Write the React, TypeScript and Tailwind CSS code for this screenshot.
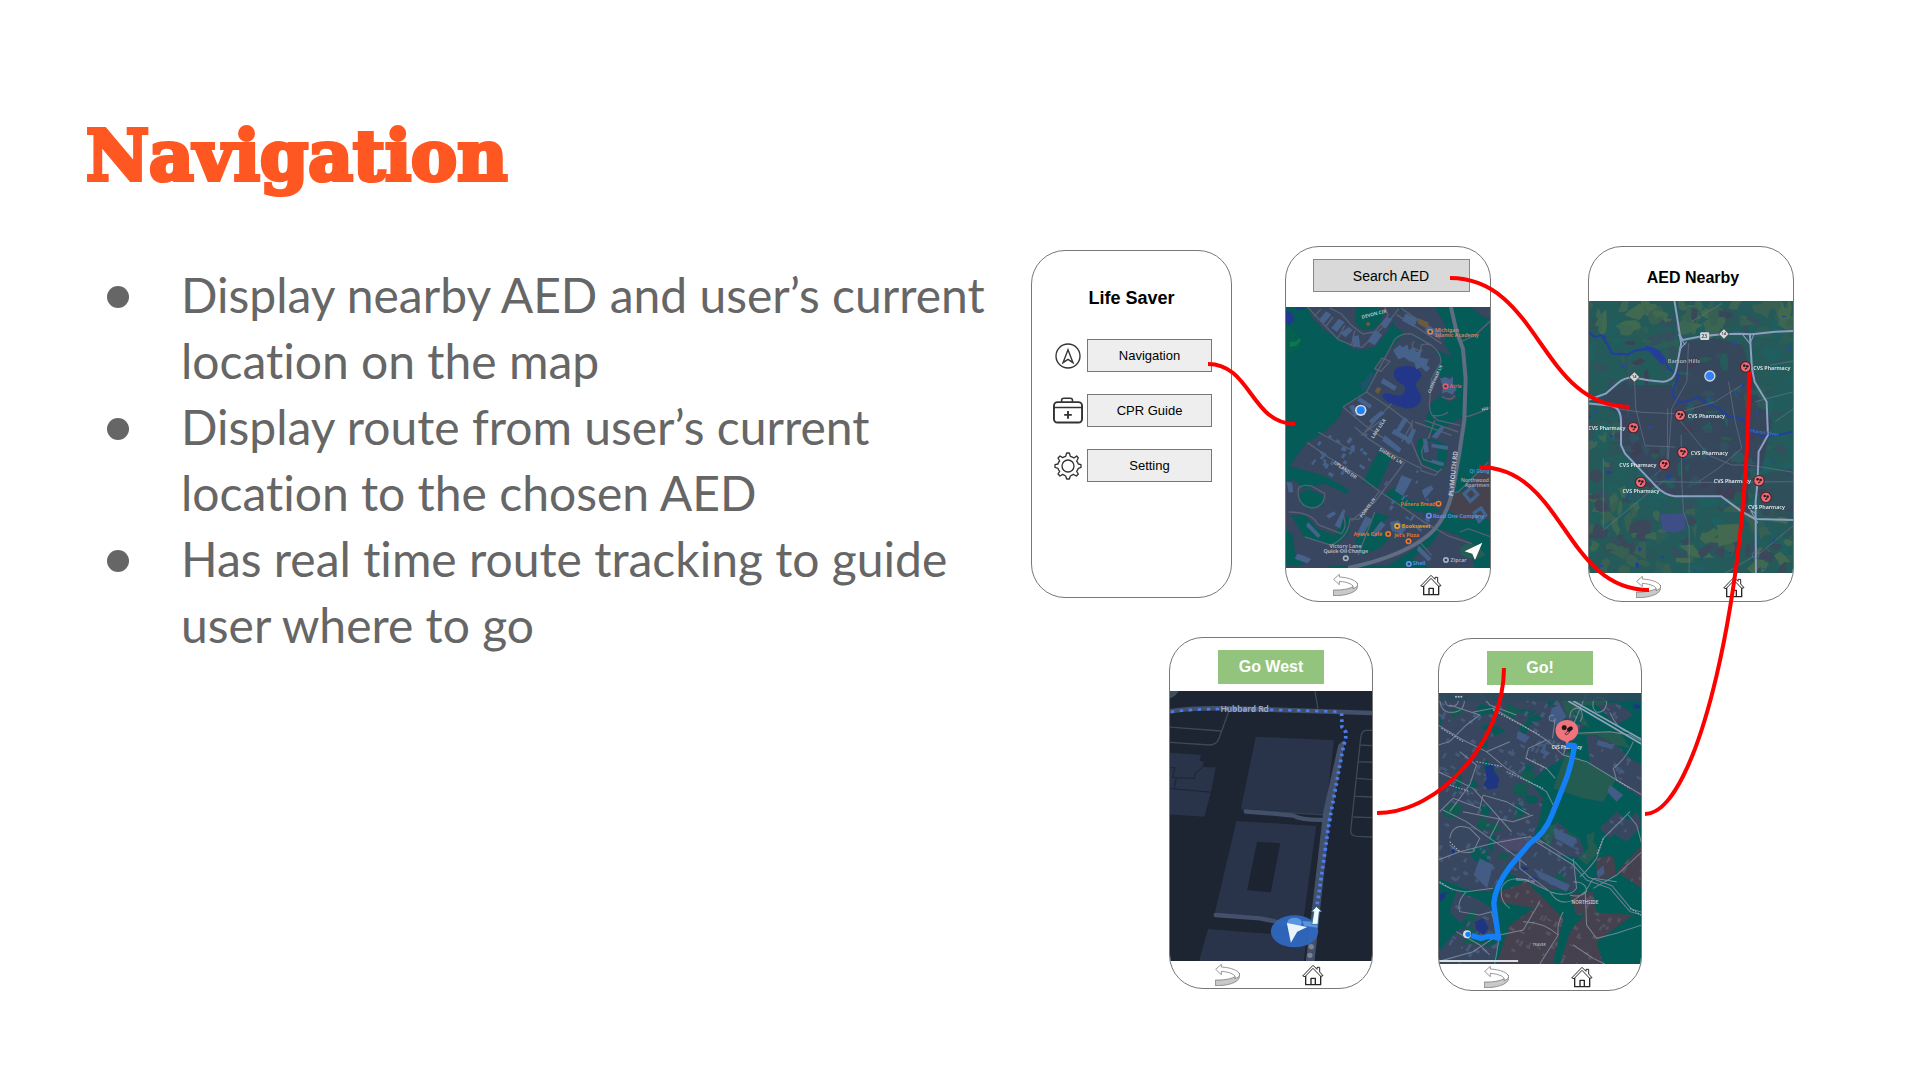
import type { ReactNode } from "react";

const points = [
  "Display nearby AED and user’s current location on the map",
  "Display route from user’s current location to the chosen AED",
  "Has real time route tracking to guide user where to go",
];

function makeRandom(seed: number) {
  let s = seed;
  return () => {
    s = (s * 16807) % 2147483647;
    return s / 2147483647;
  };
}

type Patch = { d: string; fill: string };

function blobs(seed: number, count: number, box: number[], size: number[], fills: string[]): Patch[] {
  const r = makeRandom(seed);
  return Array.from({ length: count }, () => {
    const cx = box[0] + r() * box[2];
    const cy = box[1] + r() * box[3];
    const w = size[0] + r() * size[1];
    const h = size[0] + r() * size[1];
    const n = 8;
    const pts = Array.from({ length: n }, (_, i) => {
      const a = (i / n) * Math.PI * 2 + 0.4;
      const k = 0.35 + r() * 0.9;
      return `${(cx + (Math.cos(a) * w * k) / 2).toFixed(0)} ${(cy + (Math.sin(a) * h * k) / 2).toFixed(0)}`;
    });
    return { d: `M${pts.join("L")}Z`, fill: fills[Math.floor(r() * fills.length)] };
  });
}

type House = { x: number; y: number; w: number; h: number; a: number };

function houses(seed: number, count: number, box: number[], size: number, angle: number): House[] {
  const r = makeRandom(seed);
  return Array.from({ length: count }, () => ({
    x: Math.round(box[0] + r() * box[2]),
    y: Math.round(box[1] + r() * box[3]),
    w: Math.round(size * (0.6 + r())),
    h: Math.round(size * (0.4 + r() * 0.5)),
    a: angle + (r() > 0.5 ? 90 : 0),
  }));
}

function Houses({ items, fill }: { items: House[]; fill: string }) {
  return (
    <g fill={fill}>
      {items.map((b, i) => (
        <rect key={i} x={b.x} y={b.y} width={b.w} height={b.h} transform={`rotate(${b.a} ${b.x} ${b.y})`} />
      ))}
    </g>
  );
}

function Patches({ items }: { items: Patch[] }) {
  return (
    <g>
      {items.map((p, i) => (
        <path key={i} d={p.d} fill={p.fill} />
      ))}
    </g>
  );
}

function Label({ x, y, fill = "#c3cad6", size = 15, rotate = 0, children }: { x: number; y: number; fill?: string; size?: number; rotate?: number; children: ReactNode }) {
  return (
    <text x={x} y={y} fill={fill} fontSize={size} fontFamily='"Noto Sans", sans-serif' fontWeight="600" transform={rotate ? `rotate(${rotate} ${x} ${y})` : undefined}>
      {children}
    </text>
  );
}

function CampusMap() {
  return (
    <svg viewBox="31 215 617 783" preserveAspectRatio="none" className="block h-full w-full" role="img" aria-label="Map with current location">
      <rect x="31" y="215" width="617" height="783" fill="#045b57" />
      <g fill="#38465f">
        <path d="M98 215H372L378 232 352 262 330 300 300 335 262 343 236 341 190 308 150 286 116 252Z" />
        <path d="M385 215H478L500 250 520 292 506 322 532 366 498 350 470 338 440 318 400 300 352 268Z" />
        <path d="M584 215H648V246H626L606 228Z" />
        <path d="M388 294 470 335 498 372 486 400 500 430 530 418 542 468 545 490 520 500 495 480 468 505 450 560 470 600 562 545 556 620 548 680 530 760 512 830 470 900 420 940 340 990H180L150 998H31V738L60 735 90 760 150 745 215 775 225 765 150 722 45 692 96 622 150 590 200 540 190 555 205 515 275 472 314 380Z" />
        <path d="M412 970 470 925 500 880 560 905 600 925 592 970 600 998H470Z" />
      </g>
      <path d="M538 776 562 770 600 725 648 665V850L560 852 520 825Z" fill="#46434f" />
      <g fill="#055c57">
        <path d="M242 215H304L330 228 316 262 296 282 262 284 240 262Z" />
        <path d="M264 740 310 650 352 662 308 760Z" />
        <path d="M430 610 470 610 520 630 512 690 490 710 440 680 425 640Z" />
        <path d="M330 775 362 755 410 800 480 815 500 830 440 832 372 812Z" />
        <path d="M72 775 100 762 145 780 146 812 100 822 76 805Z" />
        <path d="M50 840 90 838 130 880 180 900 205 850 222 842 225 890 190 930 90 910Z" />
        <path d="M240 915 300 830 345 845 300 880 345 905 320 935 262 960Z" />
        <path d="M31 880 55 900 62 960 90 990H31Z" />
      </g>
      <path d="M440 635 470 615 490 630 486 672 450 670Z" fill="#38465f" />
      <path d="M31 275Q60 270 66 300L82 310 76 340 50 350 31 368Z" fill="#075f50" />
      <path d="M45 320 66 318 74 308 78 316 64 332 46 334Z" fill="#0c7551" />
      <path d="M556 940Q575 912 602 930L606 930 632 958 610 970Q580 975 556 955Z" fill="#245e56" />
      <path d="M31 225Q60 232 60 255L44 268 31 262ZM62 215H92L84 224H68Z" fill="#23398f" />
      <path d="M360 402C385 386 425 390 438 412C446 428 424 436 422 448C426 466 444 478 438 496C430 516 402 526 376 514C350 508 328 496 322 482C326 468 344 474 362 480C384 484 396 472 388 450C368 444 350 424 360 402Z" fill="#22378a" />
      <g fill="none" stroke="#566174" strokeWidth="4">
        <path d="M98 215 150 270 190 312 232 330 262 336 300 300 348 250 372 220M165 218 200 236 230 270 264 296 300 290 340 240 330 215M118 244 138 222M152 275 175 245M190 308 210 270M230 330 240 286" />
        <path d="M365 238 440 285 500 325M378 218 450 268M204 515 275 470 360 312Q380 292 410 296L470 330Q500 356 498 380L470 430 464 500M418 318Q400 340 440 346 430 318 470 330M300 400 322 368 345 378 318 408Z" />
        <path d="M205 515 270 570 340 618M275 470 350 520 410 568 380 620M350 505 270 590M464 500Q460 540 490 555L556 570M500 484Q530 500 540 480M470 540Q500 545 520 530M570 545Q600 540 648 515M560 318 600 300 648 255" />
        <path d="M98 622 160 665 250 720 314 768 440 855 520 902 590 925M130 590 240 650M240 575 280 610 350 655 400 680 440 700M320 555 258 600M390 680 300 800 230 856M412 555 410 620 440 690 490 710M312 770 252 852 225 850M440 856 480 880M518 775 550 770 640 680" />
        <path d="M70 768Q70 745 110 752L150 775Q150 815 110 818 70 812 70 768M42 830Q110 830 130 868L200 895Q222 870 200 830M225 850Q225 900 170 930L90 905M150 950 262 945M300 830 250 960M430 915 470 960M555 890 580 880 648 905" />
        <path d="M420 560 530 600M450 555 550 590M480 555 460 610M460 620Q430 640 446 672L500 690M436 705 480 720 500 700" />
      </g>
      <path d="M528 215 545 290 564 340 572 430 568 555 552 660 538 740Q520 850 460 900Q380 965 220 998" fill="none" stroke="#5f6d82" strokeWidth="12" />
      <g fill="#46628a">
        <path d="M355 345 375 328 382 336 398 328 402 345 416 335 425 350 440 345 436 366 462 372 455 388 466 398 454 410 440 396 424 402 418 382 402 376 388 366 370 372Z" />
        <path d="M495 430 510 425 524 432 534 424 534 450 545 462 532 478 516 470 500 474 505 456Z" />
        <path d="M154 228 170 238 148 264 132 254ZM192 250 210 260 186 290 170 278ZM222 275 234 284 212 306 196 294ZM232 304 252 300 256 332 236 336ZM300 284 322 298 300 330 278 318ZM336 244 352 252 332 280 318 268Z" />
        <path d="M392 234 428 252 418 276 382 256ZM450 262 474 278 500 290 496 312 452 290ZM325 428 366 454 358 466 318 442Z" />
        <path d="M255 486 292 510 285 520 248 496ZM222 512 236 508 256 532 240 544ZM318 526 330 534 290 566 282 556ZM386 545 400 552 376 590 364 584ZM412 578 424 584 404 628 392 620ZM330 600 380 640 372 652 322 616ZM358 580 400 605 395 618 350 594Z" />
        <path d="M380 720 412 732 384 782 360 766ZM440 765 468 750 476 760 450 790ZM470 625 520 632 518 644 470 636ZM444 610 456 610 462 650 448 652ZM470 672 508 682 506 692 470 682ZM470 605 500 570 510 576 486 610Z" />
        <path d="M155 840 178 828 184 836 162 850ZM36 740 52 742 56 770 42 772ZM100 860 138 900 130 908 94 872ZM90 962 110 972 98 984 60 970 68 955ZM180 870 206 820 212 826 196 880ZM272 842 292 852 262 904 246 896ZM318 858 332 868 300 906 290 896ZM345 860 370 855 394 880 378 898 350 885ZM432 930 470 970 460 978 426 944Z" />
      </g>
      <Houses items={houses(5, 26, [125, 590, 170, 130], 13, 35)} fill="#46628a" />
      <Houses items={houses(9, 16, [340, 700, 120, 210], 11, 35)} fill="#46628a" />
      <g fill="#1c5368">
        <path d="M286 408 300 416 270 468 256 460ZM255 440 270 440 264 460Z" />
      </g>
      <path d="M308 455 320 460 310 476 300 468ZM430 248 462 262 456 280 428 264Z" fill="#6a5a3e" />
      <circle cx="280" cy="266" r="6" fill="#7a5a2e" />
      <g fill="none" stroke="#3e6590" strokeWidth="10">
        <path d="M568 775 590 756 608 778 586 798ZM598 832 618 818 632 840 612 858Z" />
      </g>
      <Label x={262} y={250} rotate={-14} size={14}>DEVON CIR</Label>
      <Label x={466} y={474} rotate={-66} size={12}>CLEMENGER LN</Label>
      <Label x={534} y={783} rotate={-84} size={19}>PLYMOUTH RD</Label>
      <Label x={296} y={610} rotate={-56} size={14}>LAKE LILA</Label>
      <Label x={312} y={645} rotate={32} size={14}>SHIRLEY LN</Label>
      <Label x={176} y={684} rotate={36} size={14}>UPLAND DR</Label>
      <Label x={262} y={848} rotate={-54} size={13}>POINTE LN</Label>
      <Label x={480} y={289} fill="#d08a63" size={16}>Michigan</Label>
      <Label x={480} y={304} fill="#d08a63" size={16}>Islamic Academy</Label>
      <Label x={524} y={458} fill="#ee5a68">Atria</Label>
      <Label x={377} y={811} fill="#f0762a" size={16}>Panera Bread</Label>
      <Label x={474} y={847} fill="#5f95f5" size={16}>Road One Company</Label>
      <Label x={381} y={878} fill="#f5a21d" size={16}>Booksweet</Label>
      <Label x={236} y={902} fill="#f0762a" size={16}>Ayse’s Café</Label>
      <Label x={358} y={904} fill="#f0762a" size={16}>Jet’s Pizza</Label>
      <Label x={164} y={938} fill="#b0b7c4" size={16}>Victory Lane</Label>
      <Label x={146} y={953} fill="#b0b7c4" size={16}>Quick Oil Change</Label>
      <Label x={584} y={714} fill="#3f9fe0">Qi Gong</Label>
      <Label x={558} y={739} fill="#a8a6b0">Northwood</Label>
      <Label x={570} y={754} fill="#a8a6b0">Apartmen</Label>
      <Label x={414} y={990} fill="#5f95f5" size={16}>Shell</Label>
      <Label x={527} y={979} fill="#b0b7c4" size={16}>Zipcar</Label>
      <Label x={622} y={528} rotate={-20} size={13}>HU</Label>
      {[
        [466, 289, "#d08a63"],
        [512, 453, "#ee5a68"],
        [491, 805, "#f0762a"],
        [462, 841, "#5f95f5"],
        [367, 872, "#f5a21d"],
        [340, 896, "#f0762a"],
        [401, 918, "#f0762a"],
        [213, 969, "#a9b2c0"],
        [402, 986, "#5f95f5"],
        [513, 974, "#a9b2c0"],
      ].map(([x, y, c]) => (
        <g key={`${x}-${y}`}>
          <circle cx={x} cy={y} r="9" fill={String(c)} />
          <circle cx={x} cy={y} r="4" fill="#33405a" />
        </g>
      ))}
      <circle cx="258" cy="525" r="17" fill="#d6dbe2" />
      <circle cx="258" cy="525" r="12" fill="#1e83ff" />
      <path d="M622 922 569 948 592 955 600 974Z" fill="#fff" />
    </svg>
  );
}

const terrain = blobs(11, 220, [39, 198, 617, 816], [24, 60], ["#225c5a", "#1f5d5e", "#2c5d57", "#34505e", "#2b5559", "#1f5f5f"]);
const forest = [
  ...blobs(31, 40, [39, 198, 617, 90], [20, 60], ["#3b6653", "#41694f", "#386052"]),
  ...blobs(23, 34, [39, 790, 260, 220], [16, 50], ["#3b6653", "#3a4859", "#386052"]),
  ...blobs(29, 34, [330, 820, 326, 190], [16, 50], ["#41694f", "#3a4859", "#3a4859", "#386052"]),
  ...blobs(37, 24, [39, 560, 110, 340], [16, 50], ["#3b6653", "#3a4859", "#215d5a"]),
];
const cityPatches = blobs(59, 90, [150, 290, 440, 500], [14, 40], ["#255c5b", "#2d5860", "#3f3f55", "#2b5a55", "#334f60"]);
const ponds = blobs(41, 40, [39, 240, 617, 770], [5, 14], ["#22409b", "#27489d"]);

const pharmacies: [number, number, number, number][] = [
  [511, 396, 534, 404],
  [315, 541, 338, 550],
  [175, 578, 40, 586],
  [323, 652, 347, 660],
  [268, 688, 133, 696],
  [197, 742, 142, 775],
  [551, 737, 416, 745],
  [572, 787, 518, 821],
];

function PillMark() {
  return (
    <g fill="#2b1f2a">
      <circle cx="-4" cy="-4" r="4" />
      <circle cx="5" cy="-2" r="4" />
      <rect x="-3" y="3" width="8" height="4" rx="2" transform="rotate(-35 1 5)" />
    </g>
  );
}

function NearbyMap() {
  return (
    <svg viewBox="39 198 617 816" preserveAspectRatio="none" className="block h-full w-full" role="img" aria-label="Map of nearby AED locations">
      <rect x="39" y="198" width="617" height="816" fill="#245b5a" />
      <Patches items={terrain} />
      <Patches items={forest} />
      <g fill="#38465c" opacity="0.92">
        <path d="M180 470 280 450 300 400 330 320 420 310 500 330 530 420 545 480 590 560 560 700 520 760 450 790 280 780 230 740 180 680 142 640 138 540 60 500 150 440Z" />
        <path d="M545 720 656 700V850L560 840Z" opacity="0.6" />
        <path d="M350 218 368 222 362 262 348 250ZM430 225 470 235 468 250 430 244Z" />
      </g>
      <Patches items={cityPatches} />
      <path d="M170 450 290 450 310 520 300 620 220 640 160 560Z" fill="#38465c" />
      <path d="M254 838 328 834 330 882 300 894 262 886Z" fill="#3d4f86" />
      <path d="M425 870 490 866 500 915 430 935Z" fill="#456950" />
      <Patches items={ponds} />
      <g fill="none" stroke="#22409b" strokeLinecap="round" strokeLinejoin="round">
        <path d="M39 290 60 306 80 300 98 330 112 356 160 358 180 346 216 342 240 352 262 374" strokeWidth="7" />
        <path d="M216 336 246 346 268 374 262 384 240 362Z" strokeWidth="8" fill="#22409b" />
        <path d="M268 380 284 404 312 420 300 450 292 480 312 502 340 498 370 488 400 508 430 520 460 545 500 550 530 590 560 604 610 600 656 590" strokeWidth="6" />
      </g>
      <g fill="none" stroke="#65758f" strokeWidth="2">
        <path d="M340 325 335 440 290 520 278 690M39 486 120 520 200 532 300 536 420 500 500 450M178 430 182 520 210 632 300 636M300 540 400 660 470 690 520 690 656 712M318 600 320 745 325 830 342 880V1014M85 670V880M85 885 200 790 262 740M240 740 380 742 656 740M370 740 430 700 500 640 480 560 460 440M450 1014 560 950 656 870M350 260 440 205M585 390 656 378M278 520 276 688 240 720M600 560 656 520M540 500 656 470" />
      </g>
      <g fill="none" stroke="#8e9dc2" strokeWidth="6" strokeLinejoin="round">
        <path d="M298 198 308 260 318 326 304 400Q296 440 262 440L220 436 178 428Q150 426 128 445L92 476 39 495M39 505 110 512Q138 518 138 560V630L150 656 230 740Q262 780 300 784H438L500 830 540 852 656 855" />
        <path d="M312 298 322 315 380 304 440 298 490 296 530 298 600 290 656 288" />
        <path d="M524 300 530 400 538 440 574 500 578 600 550 650 547 740 541 800 542 1014" />
        <path d="M310 300 330 330M500 296 524 326 536 298M312 345 335 320M540 835 526 825 548 865" strokeWidth="3" />
      </g>
      <circle cx="541" cy="960" r="10" fill="none" stroke="#65758f" strokeWidth="2" />
      <rect x="375" y="292" width="27" height="23" rx="4" fill="#d4d8dc" />
      <Label x={379} y={309} size={15} fill="#333a48">23</Label>
      {[
        [446, 297],
        [178, 426],
      ].map(([x, y]) => (
        <g key={x}>
          <path d={`M${x} ${y - 17} ${x + 17} ${y} ${x} ${y + 17} ${x - 17} ${y}Z`} fill="#4a4e52" />
          <path d={`M${x} ${y - 14} ${x + 14} ${y} ${x} ${y + 14} ${x - 14} ${y}Z`} fill="#d9d9d4" />
          <Label x={x - 7} y={y + 4} size={12} fill="#333a48">14</Label>
        </g>
      ))}
      <Label x={278} y={384} size={17} fill="#a7b4bd">Barton Hills</Label>
      <Label x={524} y={592} size={15} rotate={8} fill="#3f6be0">Huron River</Label>
      {pharmacies.map(([cx, cy, tx, ty]) => (
        <g key={`${cx}-${cy}`}>
          <circle cx={cx} cy={cy} r="17" fill="#4a1f2c" />
          <circle cx={cx} cy={cy} r="14" fill="#f26a70" />
          <g transform={`translate(${cx} ${cy})`}>
            <PillMark />
          </g>
          <Label x={tx} y={ty} size={16} fill="#e4e8ea">CVS Pharmacy</Label>
        </g>
      ))}
      <circle cx="404" cy="423" r="17" fill="#ccd6dc" />
      <circle cx="404" cy="423" r="13" fill="#3480f5" />
    </svg>
  );
}

function WalkMap() {
  return (
    <svg viewBox="28 198 611 810" preserveAspectRatio="none" className="block h-full w-full" role="img" aria-label="Turn by turn map on Hubbard Rd">
      <rect x="28" y="198" width="611" height="810" fill="#1d2432" />
      <path d="M28 198H58L46 212 28 222Z" fill="#3d5058" />
      <g fill="#29344a">
        <path d="M288 335 522 346 497 567 243 551Z" />
        <path d="M28 383 124 390 120 408 132 410 128 426 168 427 154 500 134 575 28 568Z" />
        <path d="M230 588 469 603 430 888 163 872Z" />
        <path d="M145 912 440 935 432 1008H118Z" />
      </g>
      <path d="M250 552 497 567 498 572 248 556Z" fill="#344057" />
      <path d="M292 650 361 655 333 802 262 796Z" fill="#1c2331" />
      <path d="M28 428H46L38 456 50 458 44 490M50 458 104 460 108 444 128 426M28 490 154 502" fill="none" stroke="#1d2432" strokeWidth="3" />
      <g fill="none" stroke="#3b4a56" strokeWidth="4">
        <path d="M465 198 474 250M206 262 178 340Q170 360 150 360L28 352M28 306 184 318M639 316H616Q604 318 602 340L572 618Q572 632 590 634L639 636M602 360 639 362M596 410 639 412M592 460 639 464M586 514 639 516M580 576 639 578" />
      </g>
      <path d="M258 560 340 566 400 572Q430 588 510 584" fill="none" stroke="#435069" strokeWidth="13" strokeLinecap="round" />
      <path d="M168 870 300 880 380 896" fill="none" stroke="#435069" strokeWidth="13" strokeLinecap="round" />
      <path d="M28 260Q90 248 200 250L400 256 639 264" fill="none" stroke="#435069" strokeWidth="14" />
      <path d="M545 350 556 346 508 600 464 1008H438L490 560 535 360Z" fill="#435069" />
      <path d="M34 261Q90 252 200 252L400 256 540 260" fill="none" stroke="#4a7df0" strokeWidth="8" strokeDasharray="10 17" />
      <path d="M545 265 546 306 558 322 557 340 548 376 525 500 508 590 488 730 470 850" fill="none" stroke="#4a7df0" strokeWidth="11" strokeDasharray="8 10" />
      <circle cx="454" cy="965" r="8" fill="#7c828c" />
      <circle cx="450" cy="991" r="8" fill="#7c828c" />
      <ellipse cx="404" cy="919" rx="71" ry="48" fill="#2f68bf" opacity="0.94" />
      <ellipse cx="404" cy="893" rx="22" ry="15" fill="#5c94e0" />
      <path d="M428 888 472 892 473 908 432 902Z" fill="#5c94e0" />
      <path d="M381 894 442 906 412 920 393 953Z" fill="#e8f3fb" />
      <path d="M470 845 454 860H462L456 898H474L478 860H486Z" fill="#f2fbff" stroke="#1d5a86" strokeWidth="2" />
      <Label x={182} y={261} size={25} fill="#a2a9b5">Hubbard Rd</Label>
    </svg>
  );
}

const suburb =
  "M25 204H400L410 240 470 290 440 330 400 400 350 430 300 470 340 520 330 580 310 640 240 700 200 780 180 800 100 790 25 760ZM500 240 560 232 610 270 560 300ZM470 330 540 340 600 400 636 420V520L560 470 480 420ZM340 640 380 590 450 640 470 700 380 690ZM240 690 330 640 440 730 440 800 330 790 230 740ZM510 610 560 560 600 590 540 640ZM556 630 620 560 636 600 590 650ZM80 800 140 820 185 850 205 960 190 1017H25V980L100 900 60 860Z";
const midtown = "M210 800 290 770 380 860 400 880 370 1017H200L240 900 310 850 210 830ZM500 700 550 690 560 750 500 770ZM560 740 636 660V790ZM420 810 490 800 500 860 440 870ZM420 920 470 860 610 870 500 950 520 1017H390Z";
const suburbHouses = houses(71, 460, [25, 215, 611, 800], 12, 30);
const greens = blobs(83, 60, [25, 220, 420, 760], [20, 50], ["#085b57", "#125c50", "#085b57"]);

function RouteMap() {
  return (
    <svg viewBox="25 204 611 813" preserveAspectRatio="none" className="block h-full w-full" role="img" aria-label="Route map to CVS Pharmacy">
      <clipPath id="built-up">
        <path d={suburb} />
      </clipPath>
      <clipPath id="midtown">
        <path d={midtown} />
      </clipPath>
      <rect x="25" y="204" width="611" height="813" fill="#045c58" />
      <path d={suburb} fill="#394860" />
      <path d={midtown} fill="#45424f" />
      <path d="M390 204H540L520 240 440 240 480 310 410 270ZM440 330 500 318 570 320 600 370 560 360 500 330ZM410 380 560 460 520 530 460 520 370 490ZM330 630 350 600 380 600 360 670Z" fill="#255d52" />
      <path d="M470 630 495 620 490 650 510 680 470 720 445 700 475 670Z" fill="#255d52" />
      <g clipPath="url(#built-up)">
        <Patches items={greens} />
        <Houses items={suburbHouses} fill="#465978" />
      </g>
      <g clipPath="url(#midtown)">
        <Houses items={suburbHouses} fill="#57535f" />
      </g>
      <g fill="#435d86">
        <path d="M365 250 390 240 410 275 380 300 360 280ZM265 318 300 336 286 354 260 340ZM330 380 350 350 346 376 362 384 350 392ZM505 345 550 360 544 372 500 360ZM540 480 580 510 560 530 532 500ZM150 700 190 720 172 790 132 750ZM310 730 420 780 410 800 330 760ZM370 610 440 640 430 670 376 640ZM500 740 520 720 524 745 505 760Z" />
      </g>
      <path d="M166 424 188 416 194 440 208 460 204 488 176 494 162 480 170 460ZM136 890 160 880 176 908 162 930 140 916ZM304 750 326 764 312 768ZM275 724 300 730 280 738ZM30 808 52 800 44 820 32 830ZM62 676 78 670 74 690ZM610 238 630 240 628 252 612 250Z" fill="#1f3684" />
      <path d="M204 644 270 634 290 650 268 682 220 668Z" fill="#4c4a6c" />
      <g fill="none" stroke="#8793a3" strokeWidth="3" opacity="0.8">
        <path d="M30 215Q30 262 64 262 104 262 104 225M45 215Q45 244 64 244 86 244 86 225M25 300 100 345 170 380 230 430 280 460 350 500 370 540M128 262 190 250 270 296 350 345 400 390 470 410 560 465 636 510M25 440 90 470 130 490 210 580 245 620M60 240 150 270 110 300 60 350 25 360M350 345 296 370 288 400 350 430 376 460M372 272A9 9 0 1 0 376 280L368 340M150 204 180 240 260 270M90 380 140 420 120 480 60 560M170 380 240 350" />
        <path d="M40 555 110 590 180 640 240 680 290 720M25 705 90 680 190 655 300 635 340 655M60 640Q70 590 120 610L150 640 130 680Q90 690 60 660M210 580 180 640M100 560 250 590 310 570M25 770Q70 800 110 800L190 790M110 800Q80 830 90 860L150 870 185 860M185 860Q195 900 205 930M195 1017 210 930 280 915 330 830" />
        <path d="M215 790Q230 750 290 765L360 800Q390 850 440 820L466 800 490 760 560 770M215 790Q210 830 240 850M270 700 270 730 360 800Q420 820 440 790M440 790 430 700M430 770Q470 770 470 800 450 820 420 810M400 860Q380 900 385 930L330 1017M466 800 470 900 500 940 560 925 636 900M430 960 490 1000 525 1017M385 930Q340 890 280 890M450 755Q470 740 500 700L520 640 600 560M490 790 560 750 636 680M595 570 620 600 636 660M205 930 130 980 25 1010M80 920 150 960 180 990" />
        <path d="M470 204 430 300 400 390M420 280Q420 245 450 250 465 270 450 290M490 230Q500 205 530 230 530 262 500 262 485 250 490 230M440 325 540 320 600 330 636 350M540 262Q560 310 590 320M560 465 550 430Q590 400 610 350M30 560 70 520 150 550M150 550 160 510 230 530 300 570" />
      </g>
      <path d="M430 228 636 344M415 228 636 358" fill="none" stroke="#8ea2bb" strokeWidth="5" />
      <path d="M310 645 430 720 470 765 540 790 600 860 636 870M318 638 436 712 476 757 546 782 604 852 636 862" fill="none" stroke="#6f8299" strokeWidth="3" />
      <g fill="none" stroke="#a3adba" strokeWidth="3" strokeDasharray="5 4">
        <path d="M35 310 100 350M190 255 330 330M290 400 350 430M140 410 220 425M230 440 340 490M60 480 120 500M520 640 500 690M560 465 600 490M30 770 70 795M60 650 90 680M600 850 636 872" />
      </g>
      <rect x="25" y="204" width="611" height="24" fill="#2d4a5c" opacity="0.85" />
      <g fill="#b5bfca">
        <circle cx="79" cy="215" r="3" />
        <circle cx="87" cy="215" r="3" />
        <circle cx="95" cy="215" r="3" />
      </g>
      <Label x={366} y={372} size={13} fill="#f0f3f4">CVS Pharmacy</Label>
      <Label x={425} y={838} size={14} fill="#c3cad6">NORTHSIDE</Label>
      <Label x={308} y={964} size={11} fill="#a3adba">TRAVER</Label>
      <Label x={258} y={766} size={10} rotate={8} fill="#a3adba">BARTON DR</Label>
      <path d="M408 360 434 362Q424 430 398 490L366 570Q345 625 300 655L240 725Q196 785 192 835L206 940Q180 928 155 940L125 932" fill="none" stroke="#1480f7" strokeWidth="16" strokeLinejoin="round" strokeLinecap="butt" />
      <circle cx="112" cy="928" r="12" fill="#d6dde5" />
      <circle cx="115" cy="928" r="8" fill="#1480f7" />
      <path d="M411 285C431 285 445 298 445 316 445 334 430 346 418 348L411 356 404 348C390 346 377 334 377 316 377 298 391 285 411 285Z" fill="#f0747b" />
      <g transform="translate(411 315)" fill="#1f171d" stroke="#1f171d">
        <circle cx="-8" cy="-7" r="7" />
        <ellipse cx="9" cy="-3" rx="9" ry="6" transform="rotate(-30 9 -3)" />
        <rect x="-6" y="5" width="15" height="6" rx="3" transform="rotate(-40 2 8)" fill="none" strokeWidth="2" />
      </g>
      <rect x="25" y="1005" width="240" height="6" fill="#d9e0e0" />
    </svg>
  );
}

function BackIcon() {
  return (
    <svg viewBox="0 0 75 66" className="h-[22px] w-[25px]" fill="none" stroke="#666" strokeWidth="2" strokeLinejoin="round" aria-hidden="true">
      <path d="M1 48C30 49 62 44 73 27V40C70 56 36 66 1 65Z" fill="#c9c9c9" />
      <path d="M2 16 19 1V9C50 11 72 20 74 32 74 38 66 42 60 44 66 32 44 24 19 22V32Z" fill="#fff" />
    </svg>
  );
}

function HomeIcon() {
  return (
    <svg viewBox="0 0 66 64" className="h-[22px] w-[22px]" fill="none" stroke="#262626" strokeWidth="4" strokeLinejoin="round" strokeLinecap="round" aria-hidden="true">
      <path d="M11 34V61H56V34" />
      <path d="M27 60V42H40V60" />
      <path d="M3 34 33 3 45 15V9H53V23L63 34 56 36 33 12 10 36Z" fill="#fff" strokeWidth="3" />
    </svg>
  );
}

function Phone({ className, header, footer, label, children }: { className: string; header: ReactNode; footer: string; label: string; children: ReactNode }) {
  return (
    <section aria-label={label} className={`flex flex-col overflow-hidden rounded-[34px] border border-[#777] bg-white ${className}`}>
      {header}
      <div className="-mx-px min-h-0 flex-1">{children}</div>
      <nav className={`flex items-center ${footer}`}>
        <button type="button" aria-label="Back" className="flex w-[87px]">
          <BackIcon />
        </button>
        <button type="button" aria-label="Home">
          <HomeIcon />
        </button>
      </nav>
    </section>
  );
}

function CompassIcon() {
  return (
    <svg viewBox="0 0 78 78" className="w-[26px]" fill="none" stroke="#333" strokeWidth="4" strokeLinejoin="miter" aria-hidden="true">
      <circle cx="39" cy="39" r="36" />
      <path d="M39 20 24 59 39 49 54 59Z" />
    </svg>
  );
}

function KitIcon() {
  return (
    <svg viewBox="0 0 94 84" className="w-[31px]" fill="none" stroke="#333" strokeWidth="6" aria-hidden="true">
      <rect x="3" y="16" width="88" height="64" rx="11" />
      <path d="M27 15V10Q27 4 34 4H54Q61 4 61 10V15M4 33H90" strokeWidth="5" />
      <path d="M47 44V68M35 56H59" />
    </svg>
  );
}

function GearIcon() {
  return (
    <svg viewBox="0 0 84 84" className="w-[28px]" fill="none" stroke="#333" strokeWidth="4" strokeLinejoin="round" aria-hidden="true">
      <circle cx="42" cy="42" r="18" />
      <path d="M38 3H46L49 13Q56 15 60 18L68 12 73 18 68 27Q71 31 73 36L81 38V46L73 49Q71 54 68 58L73 66 67 72 58 67Q54 70 49 72L46 81H38L35 72Q30 70 26 67L18 72 12 66 17 58Q13 54 12 49L3 46V38L12 36Q13 31 17 27L12 18 18 12 26 17Q30 14 35 13Z" />
    </svg>
  );
}

const menu = [
  { label: "Navigation", icon: <CompassIcon /> },
  { label: "CPR Guide", icon: <KitIcon /> },
  { label: "Setting", icon: <GearIcon /> },
];

function Connectors() {
  return (
    <svg viewBox="1031 246 763 745" className="pointer-events-none absolute inset-0 h-[745px] w-[763px]" fill="none" stroke="#f00" strokeWidth="4" aria-hidden="true">
      <path d="M1208 364C1251 364 1251 424 1295 424" />
      <path d="M1450 278C1540 278 1540 407 1630 407" />
      <path d="M1479 467C1564 467 1564 590 1649 590" />
      <path d="M1749 372C1749 593 1697 814 1645 814" />
      <path d="M1377 813C1440 813 1504 740 1504 668" />
    </svg>
  );
}

export default function App() {
  return (
    <main className="min-h-screen bg-white pt-[116px] pr-[126px] pl-[86px] font-['Liberation_Sans',Arial,sans-serif] text-black">
      <h1 className="font-['DejaVu_Serif',serif] text-[69px] leading-[80px] font-bold text-[#ff5722] [-webkit-text-stroke:4px_#ff5722]">Navigation</h1>
      <div className="mt-[50px] flex items-start">
        <ul className="min-w-0 flex-1 pt-4 pr-6 pl-[21px] font-['Lato',sans-serif] text-[48px] leading-[66px] text-[#666] [font-variant-ligatures:none]">
          {points.map((p) => (
            <li key={p} className="flex">
              <span aria-hidden="true" className="mt-[24px] mr-[52px] size-[22px] shrink-0 rounded-full bg-[#666]" />
              <span>{p}</span>
            </li>
          ))}
        </ul>
        <div className="relative w-[763px] shrink-0">
          <div className="flex items-start">
            <section aria-label="Life Saver menu" className="mt-1 mr-[53px] h-[348px] w-[201px] rounded-[34px] border border-[#777] bg-white">
              <h2 className="mt-[35px] text-center text-[18px] leading-6 font-bold">Life Saver</h2>
              <ul className="mt-[29px] flex flex-col gap-[22px]">
                {menu.map((m) => (
                  <li key={m.label} className="flex h-[33px] items-center pl-[21px]">
                    <span className="flex w-[34px] shrink-0 justify-center pr-1">{m.icon}</span>
                    <button type="button" className="h-[33px] w-[125px] shrink-0 border border-[#777] bg-[#eee] text-[13px]">
                      {m.label}
                    </button>
                  </li>
                ))}
              </ul>
            </section>
            <Phone
              label="Search AED"
              className="mr-[97px] h-[356px] w-[206px]"
              footer="h-[33px] pl-[47px]"
              header={
                <header className="flex h-[60px] shrink-0 justify-center pt-3">
                  <button type="button" className="ml-[6px] h-[33px] w-[157px] border border-[#888] bg-[#d9d9d9] pt-px text-[14px]">
                    Search AED
                  </button>
                </header>
              }
            >
              <CampusMap />
            </Phone>
            <Phone label="AED Nearby" className="h-[356px] w-[206px]" footer="h-[28px] pl-[47px]" header={<h2 className="h-[54px] shrink-0 pt-[19px] pl-1 text-center text-[16px] leading-6 font-bold">AED Nearby</h2>}>
              <NearbyMap />
            </Phone>
          </div>
          <div className="mt-[35px] ml-[138px] flex items-start">
            <Phone
              label="Walking directions"
              className="mr-[65px] h-[352px] w-[204px]"
              footer="h-[27px] pl-[45px]"
              header={
                <header className="flex h-[53px] shrink-0 justify-center pt-3">
                  <button type="button" className="h-[34px] w-[106px] bg-[#93c47d] text-[16px] font-bold text-white">
                    Go West
                  </button>
                </header>
              }
            >
              <WalkMap />
            </Phone>
            <Phone
              label="Route"
              className="mt-px h-[353px] w-[204px]"
              footer="h-[26px] pl-[45px]"
              header={
                <header className="flex h-[54px] shrink-0 justify-center pt-3">
                  <button type="button" className="h-[34px] w-[106px] bg-[#93c47d] text-[16px] font-bold text-white">
                    Go!
                  </button>
                </header>
              }
            >
              <RouteMap />
            </Phone>
          </div>
          <Connectors />
        </div>
      </div>
    </main>
  );
}
